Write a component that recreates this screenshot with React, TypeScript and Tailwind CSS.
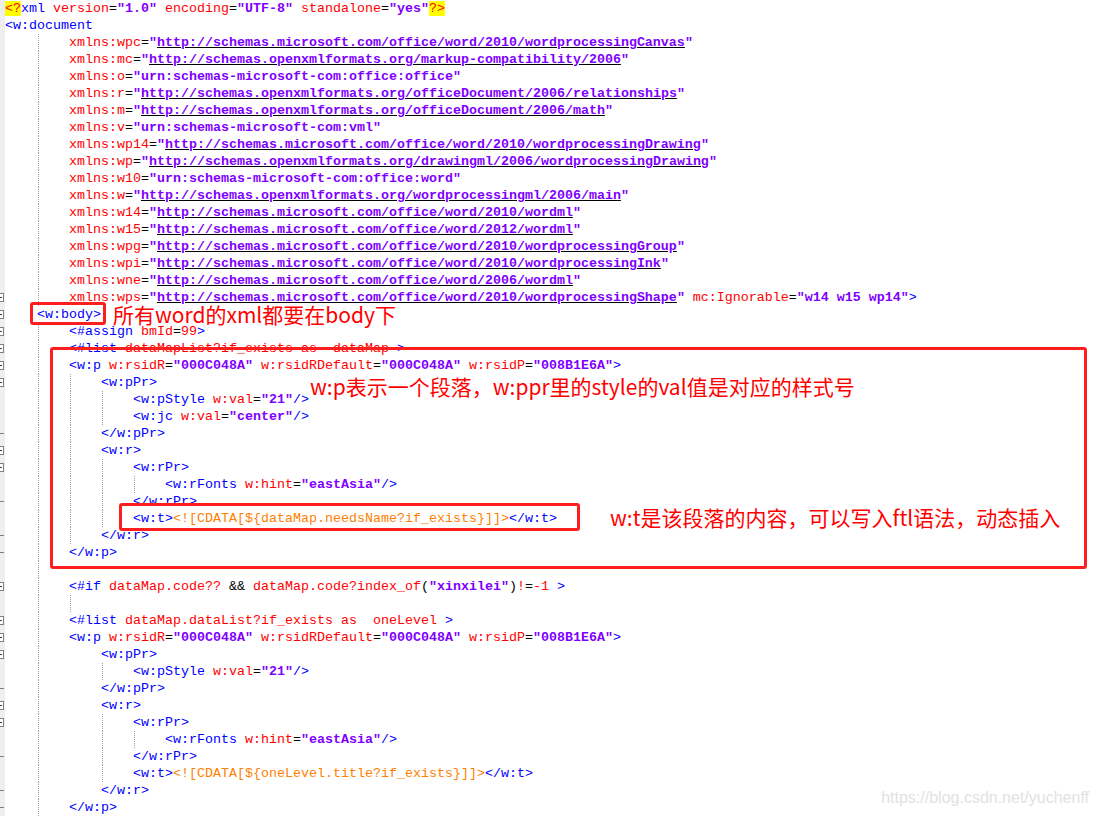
import React from "react";

type Seg = [string, string];

type Line = {
  indent: number;
  guides: number[];
  fold?: "box" | "end";
  segs: Seg[];
};

const tone: Record<string, string> = {
  b: "text-[#0000ff]",
  r: "text-[#ff0000]",
  k: "text-black",
  p: "text-[#8000ff] font-bold",
  u: "text-[#8000ff] font-bold underline decoration-black",
  o: "text-[#ff8000]",
  y: "text-[#ff0000] bg-[#ffff00]",
};

// one xmlns attribute line
const ns = (prefix: string, url: string, extra: Seg[] = []): Line => {
  const head: Seg[] = [
    ["r", "xmlns:" + prefix],
    ["k", "="],
  ];
  const value: Seg[] = url.startsWith("http")
    ? [
        ["p", '"'],
        ["u", url],
        ["p", '"'],
      ]
    : [["p", `"${url}"`]];
  return { indent: 8, guides: [4], segs: [...head, ...value, ...extra] };
};

const wp = (guides: number[]): Line => ({
  indent: 8,
  guides,
  fold: "box",
  segs: [
    ["b", "<w:p"],
    ["r", " w:rsidR"],
    ["k", "="],
    ["p", '"000C048A"'],
    ["r", " w:rsidRDefault"],
    ["k", "="],
    ["p", '"000C048A"'],
    ["r", " w:rsidP"],
    ["k", "="],
    ["p", '"008B1E6A"'],
    ["b", ">"],
  ],
});

const tag = (indent: number, guides: number[], text: string, fold?: "box" | "end"): Line => ({
  indent,
  guides,
  fold,
  segs: [["b", text]],
});

const pStyle = (guides: number[]): Line => ({
  indent: 16,
  guides,
  segs: [
    ["b", "<w:pStyle"],
    ["r", " w:val"],
    ["k", "="],
    ["p", '"21"'],
    ["b", "/>"],
  ],
});

const rFonts = (guides: number[]): Line => ({
  indent: 20,
  guides,
  segs: [
    ["b", "<w:rFonts"],
    ["r", " w:hint"],
    ["k", "="],
    ["p", '"eastAsia"'],
    ["b", "/>"],
  ],
});

const wt = (guides: number[], expr: string): Line => ({
  indent: 16,
  guides,
  segs: [
    ["b", "<w:t>"],
    ["o", `<![CDATA[\${${expr}}]]>`],
    ["b", "</w:t>"],
  ],
});

const lines: Line[] = [
  {
    indent: 0,
    guides: [],
    segs: [
      ["y", "<?"],
      ["b", "xml"],
      ["r", " version"],
      ["k", "="],
      ["p", '"1.0"'],
      ["r", " encoding"],
      ["k", "="],
      ["p", '"UTF-8"'],
      ["r", " standalone"],
      ["k", "="],
      ["p", '"yes"'],
      ["y", "?>"],
    ],
  },
  tag(0, [], "<w:document"),
  ns("wpc", "http://schemas.microsoft.com/office/word/2010/wordprocessingCanvas"),
  ns("mc", "http://schemas.openxmlformats.org/markup-compatibility/2006"),
  ns("o", "urn:schemas-microsoft-com:office:office"),
  ns("r", "http://schemas.openxmlformats.org/officeDocument/2006/relationships"),
  ns("m", "http://schemas.openxmlformats.org/officeDocument/2006/math"),
  ns("v", "urn:schemas-microsoft-com:vml"),
  ns("wp14", "http://schemas.microsoft.com/office/word/2010/wordprocessingDrawing"),
  ns("wp", "http://schemas.openxmlformats.org/drawingml/2006/wordprocessingDrawing"),
  ns("w10", "urn:schemas-microsoft-com:office:word"),
  ns("w", "http://schemas.openxmlformats.org/wordprocessingml/2006/main"),
  ns("w14", "http://schemas.microsoft.com/office/word/2010/wordml"),
  ns("w15", "http://schemas.microsoft.com/office/word/2012/wordml"),
  ns("wpg", "http://schemas.microsoft.com/office/word/2010/wordprocessingGroup"),
  ns("wpi", "http://schemas.microsoft.com/office/word/2010/wordprocessingInk"),
  ns("wne", "http://schemas.microsoft.com/office/word/2006/wordml"),
  {
    ...ns("wps", "http://schemas.microsoft.com/office/word/2010/wordprocessingShape", [
      ["r", " mc:Ignorable"],
      ["k", "="],
      ["p", '"w14 w15 wp14"'],
      ["b", ">"],
    ]),
    fold: "box",
  },
  tag(4, [], "<w:body>", "box"),
  {
    indent: 8,
    guides: [4],
    fold: "box",
    segs: [
      ["b", "<#assign"],
      ["r", " bmId"],
      ["k", "="],
      ["r", "99"],
      ["b", ">"],
    ],
  },
  {
    indent: 8,
    guides: [4],
    fold: "box",
    segs: [
      ["b", "<#list"],
      ["r", " dataMapList?if_exists as  dataMap"],
      ["b", " >"],
    ],
  },
  wp([4]),
  tag(12, [4, 8], "<w:pPr>", "box"),
  pStyle([4, 8, 12]),
  {
    indent: 16,
    guides: [4, 8, 12],
    segs: [
      ["b", "<w:jc"],
      ["r", " w:val"],
      ["k", "="],
      ["p", '"center"'],
      ["b", "/>"],
    ],
  },
  tag(12, [4, 8], "</w:pPr>", "end"),
  tag(12, [4, 8], "<w:r>", "box"),
  tag(16, [4, 8, 12], "<w:rPr>", "box"),
  rFonts([4, 8, 12, 16]),
  tag(16, [4, 8, 12], "</w:rPr>", "end"),
  wt([4, 8, 12], "dataMap.needsName?if_exists"),
  tag(12, [4, 8], "</w:r>", "end"),
  tag(8, [4], "</w:p>", "end"),
  { indent: 8, guides: [4], segs: [] },
  {
    indent: 8,
    guides: [4],
    fold: "box",
    segs: [
      ["b", "<#if"],
      ["r", " dataMap.code??"],
      ["k", " && "],
      ["r", "dataMap.code?index_of"],
      ["k", "("],
      ["p", '"xinxilei"'],
      ["k", ")"],
      ["r", "!"],
      ["k", "="],
      ["r", "-1"],
      ["b", " >"],
    ],
  },
  { indent: 12, guides: [4, 8], segs: [] },
  {
    indent: 8,
    guides: [4],
    fold: "box",
    segs: [
      ["b", "<#list"],
      ["r", " dataMap.dataList?if_exists as  oneLevel"],
      ["b", " >"],
    ],
  },
  wp([4]),
  tag(12, [4], "<w:pPr>", "box"),
  pStyle([4, 12]),
  tag(12, [4], "</w:pPr>", "end"),
  tag(12, [4], "<w:r>", "box"),
  tag(16, [4, 12], "<w:rPr>", "box"),
  rFonts([4, 12, 16]),
  tag(16, [4, 12], "</w:rPr>", "end"),
  wt([4, 12], "oneLevel.title?if_exists"),
  tag(12, [4], "</w:r>", "end"),
  tag(8, [4], "</w:p>", "end"),
];

const FoldMark = ({ kind }: { kind?: "box" | "end" }) => {
  if (kind === "box")
    return (
      <span className="flex h-[9px] w-[4px] items-center border border-l-0 border-[#808080] bg-white">
        <span className="h-px w-[2px] bg-[#404040]" />
      </span>
    );
  if (kind === "end") return <span className="h-px w-[4px] bg-[#808080]" />;
  return null;
};

const CodeLine = ({ line }: { line: Line }) => {
  const levels = Array.from({ length: line.indent / 4 }, (_, i) => i * 4);
  return (
    <div className="flex h-[17px] items-stretch whitespace-pre">
      {levels.map((col) => (
        <span key={col} className="flex h-full w-[32px] shrink-0">
          {line.guides.includes(col) && (
            <span className="ml-[1px] h-full border-l border-dotted border-[#a0a0a0]" />
          )}
        </span>
      ))}
      <span className="leading-[17px]">
        {line.segs.map(([t, text], i) => (
          <span key={i} className={tone[t]}>
            {text}
          </span>
        ))}
      </span>
    </div>
  );
};

export default function App() {
  return (
    <div className="relative flex h-[816px] w-[1099px] overflow-hidden bg-white">
      {/* fold margin, mostly cut off */}
      <div className="flex w-[5px] shrink-0 flex-col bg-[#efefef]">
        {lines.map((line, i) => (
          <div key={i} className="flex h-[17px] items-center">
            <FoldMark kind={line.fold} />
          </div>
        ))}
      </div>

      {/* editor text */}
      <div className="flex flex-col font-['Liberation_Mono',monospace] text-[13.333px]">
        {lines.map((line, i) => (
          <CodeLine key={i} line={line} />
        ))}
      </div>

      {/* annotation boxes */}
      <div className="absolute left-[30px] top-[302px] h-[23px] w-[76px] rounded-[3px] border-[3px] border-[#ff1e1e]" />
      <div className="absolute left-[50px] top-[347px] h-[222px] w-[1037px] rounded-[3px] border-[3px] border-[#ff1e1e]" />
      <div className="absolute left-[119px] top-[503px] h-[28px] w-[461px] rounded-[3px] border-[3px] border-[#ff1e1e]" />

      {/* annotation notes */}
      <div className="absolute left-[113px] top-[304px] font-['Noto_Sans_CJK_SC',sans-serif] text-[21px] leading-[21px] text-[#ff0000]">
        所有word的xml都要在body下
      </div>
      <div className="absolute left-[310px] top-[376px] font-['Noto_Sans_CJK_SC',sans-serif] text-[21px] leading-[21px] text-[#ff0000]">
        w:p表示一个段落，w:ppr里的style的val值是对应的样式号
      </div>
      <div className="absolute left-[610px] top-[507px] font-['Noto_Sans_CJK_SC',sans-serif] text-[21px] leading-[21px] text-[#ff0000]">
        w:t是该段落的内容，可以写入ftl语法，动态插入
      </div>

      {/* watermark */}
      <div className="absolute right-[10px] top-[788px] font-['Liberation_Sans',sans-serif] text-[16px] leading-[20px] text-[#e2e2e2]">
        https://blog.csdn.net/yuchenff
      </div>
    </div>
  );
}
